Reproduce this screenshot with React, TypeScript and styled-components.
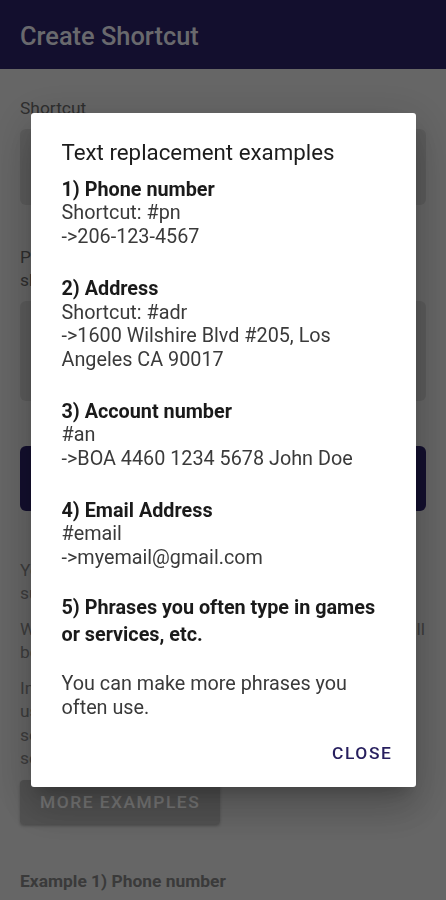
import React from "react";
import styled, { createGlobalStyle } from "styled-components";

const primary = "#271f5e";

const GlobalStyle = createGlobalStyle`
  html, body {
    margin: 0;
    padding: 0;
    height: 100%;
    overflow: hidden;
  }
  body {
    background: #d0d0d0;
    font-family: Roboto, "Noto Sans", "Liberation Sans", sans-serif;
  }
  * {
    box-sizing: border-box;
  }
`;

const examples = [
  {
    title: "1) Phone number",
    lines: ["Shortcut: #pn", "->206-123-4567"],
  },
  {
    title: "2) Address",
    lines: ["Shortcut: #adr", "->1600 Wilshire Blvd #205, Los Angeles CA 90017"],
  },
  {
    title: "3) Account number",
    lines: ["#an", "->BOA 4460 1234 5678 John Doe"],
  },
  {
    title: "4) Email Address",
    lines: ["#email", "->myemail@gmail.com"],
  },
];

const App: React.FC = () => {
  return (
    <>
      <GlobalStyle />
      <Page>
        <AppBar>
          <AppTitle>Create Shortcut</AppTitle>
        </AppBar>
        <Content>
          <FieldLabel>Shortcut</FieldLabel>
          <FilledBox height={76} />
          <FieldLabel twoLine>
            Phrase that will be typed in place of the
            <br />
            shortcut
          </FieldLabel>
          <FilledBox height={100} />
          <SaveButton>SAVE</SaveButton>
          <Para>
            You can set a shortcut for phrases you type often,
            <br />
            such as addresses or phone numbers.
          </Para>
          <Para>
            When you type the shortcut in an app, the phrase will
            <br />
            be replaced with the text you set.
          </Para>
          <Para>
            In order to use this feature, the accessibility service
            <br />
            usage has to be turned on. Go to Settings and
            <br />
            select this app from the list of downloaded
            <br />
            services.
          </Para>
          <MoreButton>MORE EXAMPLES</MoreButton>
          <ExampleTitle>Example 1) Phone number</ExampleTitle>
          <Para>Shortcut: #pn</Para>
        </Content>
      </Page>

      <Scrim>
        <Dialog role="dialog">
          <DialogTitle>Text replacement examples</DialogTitle>
          {examples.map((ex) => (
            <Section key={ex.title}>
              <SectionTitle>{ex.title}</SectionTitle>
              {ex.lines.map((l) => (
                <Line key={l}>{l}</Line>
              ))}
            </Section>
          ))}
          <LastTitle>5) Phrases you often type in games or services, etc.</LastTitle>
          <Closing>You can make more phrases you often use.</Closing>
          <Actions>
            <TextButton>CLOSE</TextButton>
          </Actions>
        </Dialog>
      </Scrim>
    </>
  );
};

export default App;

const Page = styled.div`
  min-height: 100vh;
  background: #d0d0d0;
`;

const AppBar = styled.header`
  height: 69px;
  background: ${primary};
  display: flex;
  align-items: center;
  padding: 2px 20px 0;
`;

const AppTitle = styled.h1`
  margin: 0;
  color: #d6d6de;
  font-size: 25.4px;
  font-weight: 500;
  letter-spacing: 0;
`;

const Content = styled.main`
  padding: 28px 20px 0;
  display: flex;
  flex-direction: column;
`;

const FieldLabel = styled.label<{ twoLine?: boolean }>`
  font-size: 17.4px;
  line-height: 23.5px;
  font-weight: 400;
  color: #5f5f5f;
  margin-top: ${(p) => (p.twoLine ? "41px" : "0")};
  margin-bottom: 8px;
  white-space: nowrap;
`;

const FilledBox = styled.div<{ height: number }>`
  width: 100%;
  height: ${(p) => p.height}px;
  background: #bcbcbc;
  border-radius: 6px;
`;

const SaveButton = styled.button`
  margin-top: 45px;
  height: 65px;
  width: 100%;
  border: none;
  border-radius: 6px;
  background: ${primary};
  color: #ffffff;
  font-family: inherit;
  font-size: 17.4px;
  font-weight: 500;
  letter-spacing: 1.5px;
`;

const Para = styled.p`
  margin: 48px 0 0;
  font-size: 17.4px;
  line-height: 23.5px;
  color: #7c7c7c;
  white-space: nowrap;

  & + & {
    margin-top: 12px;
  }
`;

const MoreButton = styled.button`
  align-self: flex-start;
  margin-top: 9px;
  height: 44px;
  padding: 0 20px;
  border: none;
  border-radius: 4px;
  background: #a6a6a6;
  color: #f2f2f2;
  font-family: inherit;
  font-size: 17.4px;
  font-weight: 500;
  letter-spacing: 1.5px;
  box-shadow: 0 2px 3px rgba(0, 0, 0, 0.25);
`;

const ExampleTitle = styled.h3`
  margin: 46px 0 0;
  font-size: 17.4px;
  line-height: 23.5px;
  font-weight: 700;
  color: #777777;
`;

const Scrim = styled.div`
  position: fixed;
  inset: 0;
  background: rgba(0, 0, 0, 0.51);
  display: flex;
  align-items: center;
  justify-content: center;
`;

const Dialog = styled.div`
  width: 385px;
  background: #ffffff;
  border-radius: 3px;
  padding: 25px 31px 0;
  box-shadow: 0 11px 15px -7px rgba(0, 0, 0, 0.2),
    0 24px 38px 3px rgba(0, 0, 0, 0.14), 0 9px 46px 8px rgba(0, 0, 0, 0.12);
  display: flex;
  flex-direction: column;
`;

const DialogTitle = styled.h2`
  margin: 0 0 12px;
  font-size: 22.3px;
  line-height: 28px;
  font-weight: 400;
  color: #1c1c1c;
`;

const Section = styled.div`
  margin-bottom: 28px;
  font-size: 19.8px;
  line-height: 23.7px;

  &:nth-of-type(4) {
    margin-bottom: 24px;
  }
`;

const SectionTitle = styled.div`
  font-weight: 700;
  color: #1a1a1a;
`;

const Line = styled.div`
  color: #3a3a3a;
`;

const LastTitle = styled.div`
  font-size: 19.8px;
  line-height: 27px;
  font-weight: 700;
  color: #1a1a1a;
`;

const Closing = styled.p`
  margin: 24px 0 0;
  font-size: 19.8px;
  line-height: 23.7px;
  color: #3a3a3a;
`;

const Actions = styled.div`
  display: flex;
  justify-content: flex-end;
  padding: 11px 0 12px;
  margin-right: -17px;
`;

const TextButton = styled.button`
  border: none;
  background: transparent;
  padding: 0 9px;
  height: 45px;
  color: ${primary};
  font-family: inherit;
  font-size: 17.4px;
  font-weight: 500;
  letter-spacing: 1.6px;
`;
